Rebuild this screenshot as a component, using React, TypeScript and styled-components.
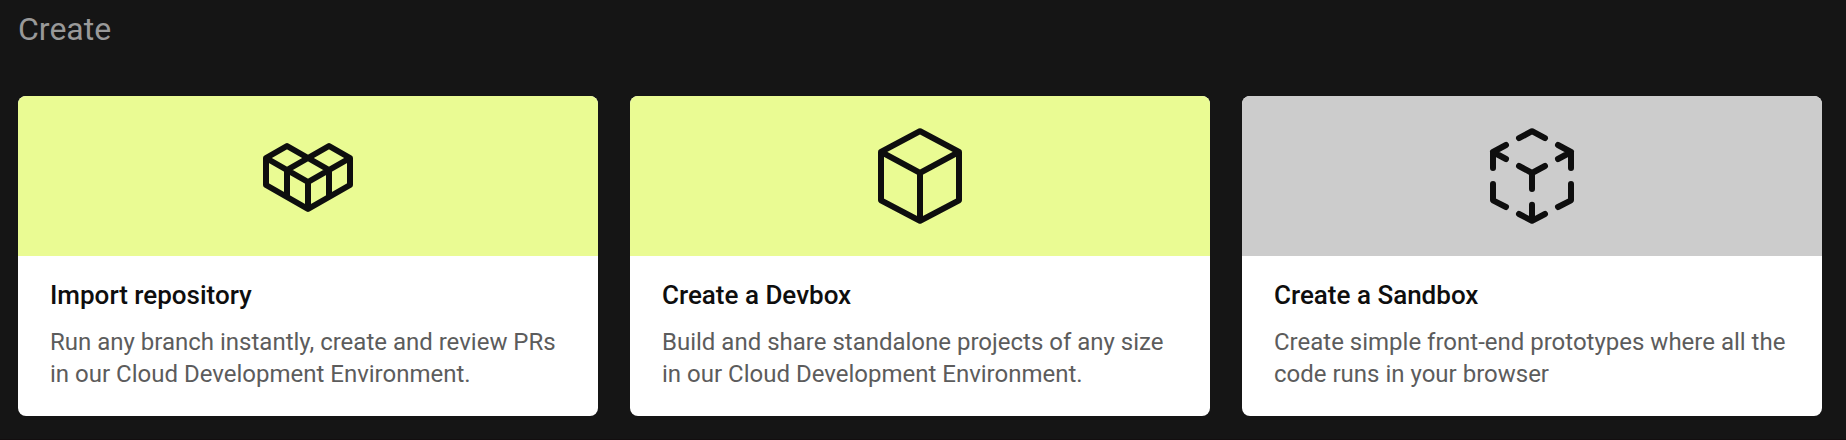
import React from "react";
import styled, { createGlobalStyle } from "styled-components";

const GlobalStyle = createGlobalStyle`
  *, *::before, *::after { box-sizing: border-box; }
  body {
    margin: 0;
    background: #151515;
    font-family: Roboto, sans-serif;
  }
`;

const Section = styled.section`
  display: flex;
  flex-direction: column;
  gap: 48px;
  height: 440px;
  padding: 10px 24px 0 18px;
  border-bottom: 1px solid #120e0f;
`;

const Heading = styled.h2`
  margin: 0;
  color: #999999;
  font-size: 32px;
  font-weight: 400;
  line-height: 38px;
`;

const CardGrid = styled.div`
  display: grid;
  grid-template-columns: repeat(3, 580px);
  gap: 32px;
`;

const Card = styled.button`
  display: flex;
  flex-direction: column;
  height: 320px;
  padding: 0;
  border: 0;
  border-radius: 8px;
  overflow: hidden;
  background: #ffffff;
  font-family: inherit;
  text-align: left;
`;

const Banner = styled.div<{ $color: string }>`
  display: flex;
  align-items: center;
  justify-content: center;
  width: 100%;
  height: 160px;
  background: ${({ $color }) => $color};
`;

const Icon = styled.svg`
  width: 120px;
  height: 120px;
  fill: none;
  stroke: #0e0e0e;
  stroke-width: 6px;
  stroke-linejoin: round;
`;

const CardBody = styled.div`
  display: flex;
  flex-direction: column;
  gap: 16px;
  padding: 24px 32px 0;
`;

const CardTitle = styled.h3`
  margin: 0;
  color: #0e0e0e;
  font-size: 26px;
  font-weight: 500;
  line-height: 30px;
`;

const CardText = styled.p`
  margin: 0;
  color: #5c5c5c;
  font-size: 24px;
  line-height: 32px;
  white-space: pre-line;
`;

const RepositoryIcon = () => (
  <Icon viewBox="0 0 120 120">
    <path d="M60 42 39 30 18 42V69L60 93 102 69V42L81 30Z" />
    <path d="M18 42 60 66 102 42M39 54 60 42 81 54M39 54V81M60 66V93M81 54V81" />
  </Icon>
);

const DevboxIcon = () => (
  <Icon viewBox="0 0 120 120">
    <path d="M60 15.2 21 35.9V84.3L60 104.8 99 84.3V35.9Z" />
    <path d="M21 35.9 60 56.8 99 35.9M60 56.8V104.8" />
  </Icon>
);

const SandboxIcon = () => (
  <Icon viewBox="0 0 120 120" strokeLinecap="round">
    <path d="M47 22.2 60 15.2 73 22.2" />
    <path d="M34 29 21 36 34 43M21 36V52" />
    <path d="M86 29 99 36 86 43M99 36V52" />
    <path d="M47 50 60 57 73 50M60 57V73" />
    <path d="M21 68V84.3L34 91" />
    <path d="M99 68V84.3L86 91" />
    <path d="M47 98 60 104.8 73 98M60 88.8V104.8" />
  </Icon>
);

const cards = [
  {
    title: "Import repository",
    text: "Run any branch instantly, create and review PRs\nin our Cloud Development Environment.",
    color: "#eafb93",
    Glyph: RepositoryIcon,
  },
  {
    title: "Create a Devbox",
    text: "Build and share standalone projects of any size\nin our Cloud Development Environment.",
    color: "#eafb93",
    Glyph: DevboxIcon,
  },
  {
    title: "Create a Sandbox",
    text: "Create simple front-end prototypes where all the\ncode runs in your browser",
    color: "#cccccc",
    Glyph: SandboxIcon,
  },
];

export default function App() {
  return (
    <>
      <GlobalStyle />
      <Section>
        <Heading>Create</Heading>
        <CardGrid>
          {cards.map(({ title, text, color, Glyph }) => (
            <Card key={title} type="button">
              <Banner $color={color}>
                <Glyph />
              </Banner>
              <CardBody>
                <CardTitle>{title}</CardTitle>
                <CardText>{text}</CardText>
              </CardBody>
            </Card>
          ))}
        </CardGrid>
      </Section>
    </>
  );
}
